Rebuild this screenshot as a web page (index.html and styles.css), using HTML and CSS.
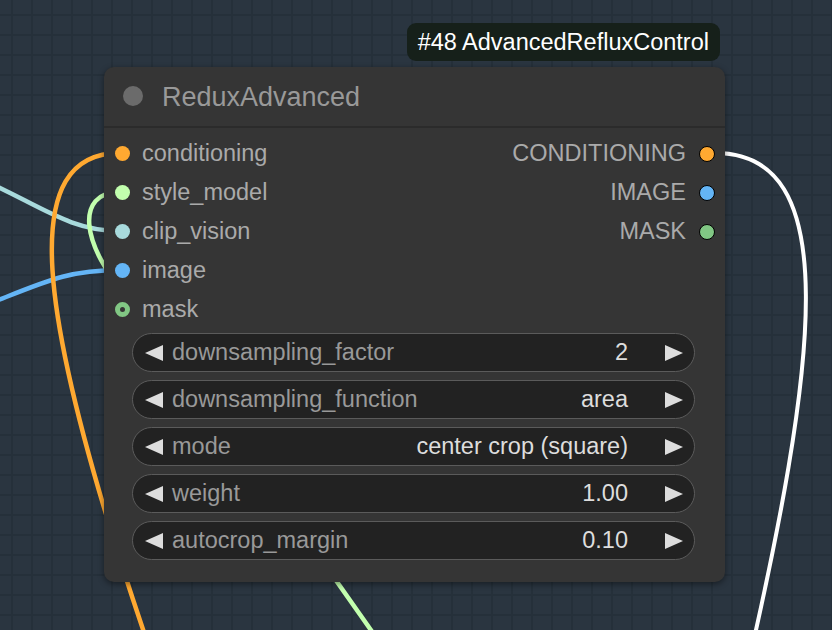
FILE: index.html
```html
<!DOCTYPE html>
<html>
<head>
<meta charset="utf-8">
<link rel="stylesheet" href="styles.css">
</head>
<body>
<div class="canvas">
  <svg class="wires" width="832" height="630" viewBox="0 0 832 630">
    <path class="wire" stroke="#A8DADC" d="M -60 162 C 30 195, 60 231, 120 231"/>
    <path class="wire" stroke="#64B5F6" d="M -40 315 C 40 285, 60 270, 120 270"/>
    <path class="wire" stroke="#C2FFAE" d="M 120 192 C 75 192, 80 245, 130 300 S 300 530, 385 650"/>
    <path class="wire" stroke="#FFA931" d="M 150 650 C 30 300, 20 153, 120 153"/>
    <path class="wire white" stroke="#ffffff" d="M 715 153 C 842 153, 822 350, 740 700"/>
  </svg>

  <div class="node">
    <div class="badge">#48 AdvancedRefluxControl</div>
    <div class="node-header">
      <span class="collapse-dot"></span>
      <span class="node-title">ReduxAdvanced</span>
    </div>
    <div class="slots">
      <div class="inputs">
        <div class="slot"><span class="dot c-cond"></span><span class="slot-label">conditioning</span></div>
        <div class="slot"><span class="dot c-style"></span><span class="slot-label">style_model</span></div>
        <div class="slot"><span class="dot c-clip"></span><span class="slot-label">clip_vision</span></div>
        <div class="slot"><span class="dot c-image"></span><span class="slot-label">image</span></div>
        <div class="slot"><span class="dot ring c-mask-ring"></span><span class="slot-label">mask</span></div>
      </div>
      <div class="outputs">
        <div class="slot out"><span class="slot-label">CONDITIONING</span><span class="dot outline c-cond"></span></div>
        <div class="slot out"><span class="slot-label">IMAGE</span><span class="dot outline c-image"></span></div>
        <div class="slot out"><span class="slot-label">MASK</span><span class="dot outline c-mask"></span></div>
      </div>
    </div>
    <div class="widgets">
      <div class="widget"><span class="arrow left"></span><span class="w-label">downsampling_factor</span><span class="w-value">2</span><span class="arrow right"></span></div>
      <div class="widget"><span class="arrow left"></span><span class="w-label">downsampling_function</span><span class="w-value">area</span><span class="arrow right"></span></div>
      <div class="widget"><span class="arrow left"></span><span class="w-label">mode</span><span class="w-value">center crop (square)</span><span class="arrow right"></span></div>
      <div class="widget"><span class="arrow left"></span><span class="w-label">weight</span><span class="w-value">1.00</span><span class="arrow right"></span></div>
      <div class="widget"><span class="arrow left"></span><span class="w-label">autocrop_margin</span><span class="w-value">0.10</span><span class="arrow right"></span></div>
    </div>
  </div>
</div>
</body>
</html>
```

FILE: styles.css
```css
html, body {
  margin: 0;
  padding: 0;
}
body {
  width: 832px;
  height: 630px;
  overflow: hidden;
  font-family: "Liberation Sans", Arial, sans-serif;
}
.canvas {
  position: relative;
  width: 832px;
  height: 630px;
  background-color: #2a3540;
  background-image:
    linear-gradient(to right, #25303a 2px, transparent 2px),
    linear-gradient(to bottom, #25303a 2px, transparent 2px);
  background-size: 20px 20px;
  background-position: 11px 14px;
}
.wires {
  position: absolute;
  left: 0;
  top: 0;
}
.wire {
  fill: none;
  stroke-width: 4.5;
  stroke-linecap: round;
}
.wire.white {
  stroke-width: 4;
}
.node {
  position: absolute;
  left: 104px;
  top: 67px;
  width: 621px;
  height: 515px;
  background: #353535;
  border-radius: 10px;
  box-shadow: 0 2px 6px rgba(0, 0, 0, 0.45);
  box-sizing: border-box;
}
.badge {
  position: absolute;
  right: 5px;
  top: -44px;
  height: 38px;
  padding: 0 11px 0 11px;
  background: #16201a;
  border-radius: 9px;
  color: #ffffff;
  font-size: 23.5px;
  line-height: 38px;
  white-space: nowrap;
}
.node-header {
  height: 58px;
  border-bottom: 2px solid #2b2b2b;
  display: flex;
  align-items: center;
  padding-left: 19px;
  gap: 19px;
  padding-top: 1px;
  box-sizing: content-box;
}
.collapse-dot {
  width: 20px;
  height: 20px;
  border-radius: 50%;
  background: #6b6b6b;
  flex: none;
  margin-top: -2px;
}
.node-title {
  color: #999999;
  font-size: 27px;
  line-height: 1;
}
.slots {
  display: flex;
  justify-content: space-between;
  padding: 6px 10px 0 11px;
}
.inputs, .outputs {
  display: flex;
  flex-direction: column;
}
.slot {
  height: 39px;
  display: flex;
  align-items: center;
  gap: 12px;
  color: #aaaaaa;
  font-size: 23.5px;
}
.slot.out {
  justify-content: flex-end;
  gap: 13px;
}
.slot-label {
  line-height: 1;
}
.dot {
  width: 15px;
  height: 15px;
  border-radius: 50%;
  flex: none;
  box-sizing: border-box;
}
.dot.outline {
  width: 16px;
  height: 16px;
  border: 1.6px solid #000;
}
.c-cond { background: #FFA931; }
.c-style { background: #C2FFAE; }
.c-clip { background: #A8DADC; }
.c-image { background: #64B5F6; }
.c-mask { background: #81C784; }
.c-mask-ring {
  background: #353535;
  border: 5px solid #81C784;
}
.widgets {
  display: flex;
  flex-direction: column;
  gap: 8px;
  padding: 4px 30px 0 28px;
}
.widget {
  height: 39px;
  box-sizing: border-box;
  border: 1.5px solid #5b5b5b;
  border-radius: 20px;
  background: #222222;
  display: flex;
  align-items: center;
  padding: 0 11px 0 12px;
  font-size: 23.5px;
}
.arrow {
  width: 0;
  height: 0;
  border-top: 8px solid transparent;
  border-bottom: 8px solid transparent;
  flex: none;
}
.arrow.left {
  border-right: 18px solid #dddddd;
}
.arrow.right {
  border-left: 18px solid #dddddd;
}
.w-label {
  color: #999999;
  margin-left: 9px;
  flex: 1;
  line-height: 1;
}
.w-value {
  color: #dddddd;
  margin-right: 37px;
  line-height: 1;
}
```
